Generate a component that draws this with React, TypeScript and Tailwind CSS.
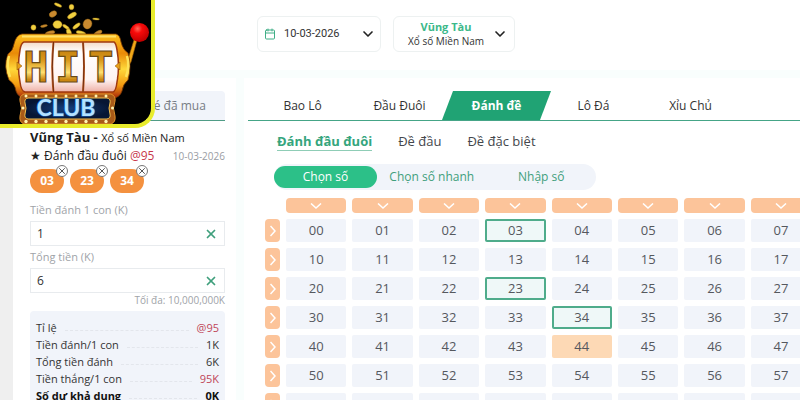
import { Calendar, ChevronDown, X } from 'lucide-react';
import clsx from 'clsx';

const COLUMNS = Array.from({ length: 10 }, (_, i) => i);
const ROWS = Array.from({ length: 10 }, (_, i) => i);
const SELECTED = ['03', '23', '34'];
const HOVERED = '44';

const GAMES = ['Bao Lô', 'Đầu Đuôi', 'Đánh đề', 'Lô Đá', 'Xỉu Chủ'];
const BET_TYPES = ['Đánh đầu đuôi', 'Đề đầu', 'Đề đặc biệt'];
const PICK_MODES = ['Chọn số', 'Chọn số nhanh', 'Nhập số'];

const SUMMARY = [
  { label: 'Tỉ lệ', value: '@95', red: true },
  { label: 'Tiền đánh/1 con', value: '1K' },
  { label: 'Tổng tiền đánh', value: '6K' },
  { label: 'Tiền thắng/1 con', value: '95K', red: true },
  { label: 'Số dư khả dụng', value: '0K', bold: true },
];

// x, y, rx, ry, rotation
const COINS = [
  [58, 5, 4, 1.5, 25],
  [71.5, 7, 2.5, 2.8, 0],
  [53, 14, 4, 2.8, -30],
  [72, 15.5, 5, 2.4, -30],
  [57.5, 24.5, 4.6, 4, 0],
  [87.5, 24, 4.4, 5, 20],
  [96, 19, 3.5, 1, 5],
  [33.5, 27.5, 2.6, 2.8, 0],
  [44, 26, 3.5, 1.2, -12],
  [76.5, 26, 4.5, 1.8, -38],
  [66, 27, 4, 1.6, 35],
  [50, 33, 5, 2, -15],
  [69, 32.5, 4, 2.4, 70],
  [81, 33, 5, 2, 15],
  [98, 33, 4.5, 2, -28],
];

function Logo() {
  return (
    <a
      href="#"
      aria-label="HIT CLUB"
      className="absolute left-0 top-0 z-10 block overflow-hidden rounded-br-[20px] border-b-4 border-r-4 border-[#e9ec2c] bg-black"
    >
      <svg width="151" height="124" viewBox="0 0 151 124">
        <defs>
          <linearGradient id="frame" x1="0" y1="0" x2="0" y2="1">
            <stop offset="0" stopColor="#ffc21e" />
            <stop offset="0.3" stopColor="#e98a08" />
            <stop offset="0.55" stopColor="#ffd83a" />
            <stop offset="0.8" stopColor="#f39a10" />
            <stop offset="1" stopColor="#a8260b" />
          </linearGradient>
          <linearGradient id="reel" x1="0" y1="0" x2="0" y2="1">
            <stop offset="0" stopColor="#f3dcc8" />
            <stop offset="0.2" stopColor="#ffffff" />
            <stop offset="0.75" stopColor="#fff4f2" />
            <stop offset="1" stopColor="#eeb0a6" />
          </linearGradient>
          <linearGradient id="letter" x1="0" y1="0" x2="0" y2="1">
            <stop offset="0" stopColor="#b8740c" />
            <stop offset="0.35" stopColor="#d9981a" />
            <stop offset="0.6" stopColor="#ffe070" />
            <stop offset="0.75" stopColor="#c98410" />
            <stop offset="1" stopColor="#e9b02c" />
          </linearGradient>
          <radialGradient id="ball" cx="0.4" cy="0.3" r="0.7">
            <stop offset="0" stopColor="#ff6a5a" />
            <stop offset="0.35" stopColor="#f80a0a" />
            <stop offset="1" stopColor="#c00000" />
          </radialGradient>
          <radialGradient id="sign">
            <stop offset="0" stopColor="#14407e" />
            <stop offset="1" stopColor="#071634" />
          </radialGradient>
        </defs>

        {COINS.map(([x, y, rx, ry, r], i) => (
          <ellipse
            key={i}
            cx={x}
            cy={y}
            rx={rx}
            ry={ry}
            transform={`rotate(${r} ${x} ${y})`}
            fill={i % 3 === 2 ? '#c98a30' : '#f0d040'}
            stroke="#8a6010"
            strokeWidth="0.4"
          />
        ))}

        {/* lever */}
        <path d="M137 40 L131 62 L121 78 L124 58 L129 56 L134 40 Z" fill="#f0a818" stroke="#9a5a08" strokeWidth="0.6" />
        <circle cx="139.5" cy="32.5" r="9.5" fill="url(#ball)" />

        {/* cabinet */}
        <path
          d="M22 34 H116 Q120 35 121 42 Q123 50 128 53 Q132 66 128 80 Q123 84 122 91 Q120 97 114 98 H24 Q18 97 16 91 Q15 84 9 80 Q3 66 8 54 Q13 51 14 44 Q16 35 22 34 Z"
          fill="url(#frame)"
          stroke="#7a3a04"
          strokeWidth="0.8"
        />
        <path d="M22 36.5 H116" stroke="#ffe068" strokeWidth="2" />
        <path d="M9 56 Q6 66 10 77 M127 56 Q130 66 126 77" fill="none" stroke="#ffe25a" strokeWidth="2.5" />
        <path
          d="M24 42 H114 Q116 43 117 50 Q120 66 117 82 Q116 91 113 92 H25 Q21 91 20 82 Q17 66 20 50 Q21 43 24 42 Z"
          fill="url(#reel)"
          stroke="#a03a10"
          strokeWidth="1.5"
        />
        <path d="M53.5 42 Q51 66 53.5 92 M83 42 Q85 66 83 92" fill="none" stroke="#c05a20" strokeWidth="2" />
        <path d="M53.5 42 Q51 66 53.5 92 M83 42 Q85 66 83 92" fill="none" stroke="#4a1a08" strokeWidth="0.7" />
        <path d="M17 62 L22 66 L17 70 Z M120 62 L115 66 L120 70 Z" fill="#e8a018" stroke="#8a4a08" strokeWidth="0.5" />

        <g
          fontFamily="DejaVu Sans Mono"
          fontWeight="700"
          fontSize="42"
          textAnchor="middle"
          fill="url(#letter)"
          stroke="#6a4a18"
          strokeWidth="1.2"
        >
          <text x="36" y="82">H</text>
          <text x="68" y="82">I</text>
          <text x="101" y="82">T</text>
        </g>

        {/* sign */}
        <path
          d="M24 94 H111 Q116 96 115 101 Q112 108 115 116 Q116 122 111 124 H24 Q19 122 20 116 Q23 108 20 101 Q19 96 24 94 Z"
          fill="#a85a18"
          stroke="#e0922c"
          strokeWidth="1"
        />
        <path
          d="M28 98 H107 Q111 99 110 103 Q108 108 110 114 Q111 118 107 119 H28 Q24 118 25 114 Q27 108 25 103 Q24 99 28 98 Z"
          fill="url(#sign)"
          stroke="#f0c050"
          strokeWidth="1"
        />
        <g fill="#fff3b0">
          {[26, 36, 46, 56, 66, 76, 86, 96, 106].map((x) => (
            <g key={x}>
              <circle cx={x} cy="96" r="1.5" />
              <circle cx={x} cy="121.5" r="1.7" />
            </g>
          ))}
          <circle cx="23" cy="108" r="1.5" />
          <circle cx="112.5" cy="108" r="1.5" />
        </g>
        <text
          x="66"
          y="116"
          fontFamily="Lato"
          fontSize="23"
          fontWeight="700"
          textAnchor="middle"
          fill="#b4e2ff"
          stroke="#1b62b8"
          strokeWidth="1.2"
          paintOrder="stroke"
        >
          CLUB
        </text>
      </svg>
    </a>
  );
}

function Header() {
  return (
    <header className="flex h-[70px] gap-3 bg-white pl-[257px] pt-4">
      <button type="button" className="flex h-9 w-[124px] items-center rounded-md border border-[#edf1f1] pl-1.5 pr-1 font-[Roboto,sans-serif] text-[11px] text-[#333]">
        <Calendar className="mr-2 size-3 text-[#3fae86]" />
        10-03-2026
        <ChevronDown className="ml-auto size-4 text-[#222]" strokeWidth={2.5} />
      </button>
      <button type="button" className="flex h-9 w-[122px] items-center justify-between rounded-md border border-[#edf1f1] pl-3.5 pr-1.5">
        <span className="text-center">
          <span className="block text-[11px] font-bold leading-[14px] text-[#3cb98a]">Vũng Tàu</span>
          <span className="block text-[10px] leading-[14px] text-[#333]">Xổ số Miền Nam</span>
        </span>
        <ChevronDown className="size-4 text-[#222]" strokeWidth={2.5} />
      </button>
    </header>
  );
}

function MoneyField({ id, label, value }: { id: string; label: string; value: string }) {
  return (
    <div>
      <label htmlFor={id} className="block h-5 text-[11px] leading-[18px] text-[#a0a3a8]">{label}</label>
      <div className="flex h-[25px] items-center border border-[#e8ebee] bg-white px-1.5">
        <input id={id} defaultValue={value} className="min-w-0 flex-1 text-[12px] text-[#333] outline-none" />
        <button type="button" aria-label="Xóa">
          <X className="size-3.5 text-[#3f9f7c]" strokeWidth={3} />
        </button>
      </div>
    </div>
  );
}

function BetSlip() {
  return (
    <aside className="w-[223px] shrink-0 bg-white pl-[17px] pr-[11px] pt-[13px]">
      <div className="flex h-[30px] border-b border-[#4f9c86] text-[12px] text-[#777c84]">
        <button type="button" aria-label="Phiếu cược" className="flex-1" />
        <button type="button" className="flex-1 rounded-tr bg-[#f1f4fa]">Vé đã mua</button>
      </div>

      <h2 className="mt-[7px] text-[13px] font-bold leading-[18px] text-[#1c1c1c]">
        Vũng Tàu - <span className="text-[11px] font-normal">Xổ số Miền Nam</span>
      </h2>
      <div className="flex items-center justify-between text-[12px] leading-[18px] text-[#222]">
        <span className="whitespace-nowrap">
          ★ Đánh đầu đuôi <span className="text-[#c8374c]">@95</span>
        </span>
        <span className="text-[10px] text-[#9a9da3]">10-03-2026</span>
      </div>

      <div className="mt-1 flex gap-1.5">
        {SELECTED.map((n) => (
          <span key={n} className="relative flex h-6 w-[34px] items-center justify-center rounded-full bg-[#f4913f] text-[12px] font-bold text-white">
            {n}
            <button
              type="button"
              aria-label={`Bỏ ${n}`}
              className="absolute -right-1 -top-1 flex size-3 items-center justify-center rounded-full border border-[#777] bg-white"
            >
              <X className="size-2.5 shrink-0 text-[#333]" strokeWidth={2} />
            </button>
          </span>
        ))}
      </div>

      <div className="mt-2 flex flex-col gap-0.5">
        <MoneyField id="stake" label="Tiền đánh 1 con (K)" value="1" />
        <MoneyField id="total" label="Tổng tiền (K)" value="6" />
      </div>
      <p className="text-right text-[10px] leading-[14px] text-[#a0a3a8]">Tối đa: 10,000,000K</p>

      <dl className="mt-1 rounded bg-[#f1f4fa] px-1.5 py-2 text-[11px] leading-[17px] text-[#333]">
        {SUMMARY.map((row) => (
          <div key={row.label} className={clsx('flex items-center gap-2', row.bold && 'font-bold text-[#111]')}>
            <dt>{row.label}</dt>
            <span className="mt-1.5 flex-1 border-b border-dashed border-[#e3e6ec]" />
            <dd className={clsx(row.red && 'text-[#c04558]')}>{row.value}</dd>
          </div>
        ))}
      </dl>
    </aside>
  );
}

function NumberGrid() {
  return (
    <div className="mt-2 grid w-[679px] grid-cols-[15px_repeat(10,minmax(0,1fr))] gap-1.5">
      <span />
      {COLUMNS.map((c) => (
        <button key={c} type="button" aria-label={`Cột ${c}`} className="flex h-[15px] items-center justify-center rounded bg-[#fcc49a] text-white">
          <svg width="12" height="6" viewBox="0 0 12 6" fill="none" stroke="currentColor" strokeWidth="1.5">
            <path d="M1 0.5 L6 5 L11 0.5" />
          </svg>
        </button>
      ))}
      {ROWS.map((r) => (
        <div key={r} className="contents">
          <button type="button" aria-label={`Hàng ${r}`} className="flex h-[23px] items-center justify-center rounded bg-[#fcc49a] text-white">
            <svg width="6" height="12" viewBox="0 0 6 12" fill="none" stroke="currentColor" strokeWidth="1.5">
              <path d="M0.5 1 L5 6 L0.5 11" />
            </svg>
          </button>
          {COLUMNS.map((c) => {
            const n = `${r}${c}`;
            return (
              <button
                key={n}
                type="button"
                className={clsx(
                  'h-[23px] rounded-xs text-[13px] leading-[23px] text-[#55585e]',
                  SELECTED.includes(n) && 'bg-[#eff8f8] inset-ring-2 inset-ring-[#4fac8b]',
                  n === HOVERED && 'bg-[#fdd9b5]',
                  !SELECTED.includes(n) && n !== HOVERED && 'bg-[#f1f4fa]',
                )}
              >
                {n}
              </button>
            );
          })}
        </div>
      ))}
    </div>
  );
}

function Board() {
  return (
    <main className="min-w-0 flex-1 overflow-hidden bg-white pl-1 pt-[13px]">
      <nav className="flex h-[30px] border-b border-[#45a587] pl-1.5 text-[12px] text-[#333]">
        {GAMES.map((g) => (
          <button
            key={g}
            type="button"
            className={clsx(
              g === 'Đánh đề'
                ? '-mx-1.5 w-[109px] bg-[#20a374] font-bold text-white [clip-path:polygon(11px_0,100%_0,98px_100%,0_100%)]'
                : 'w-[97px]',
            )}
          >
            {g}
          </button>
        ))}
      </nav>

      <div className="flex gap-[26px] pl-[29px] pt-3 text-[13px] leading-[17px] text-[#44474c]">
        {BET_TYPES.map((b, i) => (
          <button key={b} type="button" className={clsx('border-b', i === 0 ? 'border-[#8fcdb6] font-bold text-[#35a57d]' : 'border-transparent')}>
            {b}
          </button>
        ))}
      </div>

      <div className="ml-[26px] mt-[13px] flex h-[26px] w-[322px] items-center rounded-full bg-[#f1f4fa] text-[12px] text-[#3f9f7c]">
        {PICK_MODES.map((m, i) => (
          <button key={m} type="button" className={clsx(i === 0 ? 'h-[22px] w-[103px] rounded-full bg-[#2cc088] font-medium text-white' : 'flex-1')}>
            {m}
          </button>
        ))}
      </div>

      <div className="pl-[17px]">
        <NumberGrid />
      </div>
    </main>
  );
}

export default function App() {
  return (
    <div className="relative flex h-screen flex-col overflow-hidden bg-[#f9fefd] font-['Open_Sans',sans-serif]">
      <Logo />
      <Header />
      <div className="mt-2 flex min-h-0 flex-1 gap-2">
        <div className="-mr-2 w-[13px] shrink-0 bg-[#efefef]" />
        <BetSlip />
        <Board />
      </div>
    </div>
  );
}
